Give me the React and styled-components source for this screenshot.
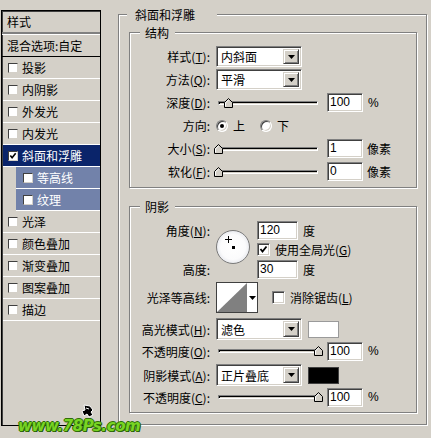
import React from 'react';
import styled, { createGlobalStyle } from 'styled-components';

const GlobalStyle = createGlobalStyle`
  html, body {
    margin: 0;
    padding: 0;
    background: #d4d0c8;
  }
  body {
    font-family: "Noto Sans CJK SC", "Liberation Sans", sans-serif;
    font-size: 12px;
    color: #000;
  }
`;

const Window = styled.div`
  position: relative;
  display: flex;
  align-items: flex-start;
  width: 431px;
  height: 438px;
  background: #d4d0c8;
  overflow: hidden;
`;

/* ---------- left list ---------- */

const Sidebar = styled.div`
  box-sizing: border-box;
  margin: 10px 0 0 1px;
  width: 100px;
  height: 416px;
  border: 1px solid #000;
  box-shadow: inset 1px 1px 0 #404040;
  display: flex;
  flex-direction: column;
`;

const SideHeader = styled.div`
  height: 21px;
  line-height: 21px;
  padding-left: 5px;
`;

const Divider = styled.div`
  height: 1px;
  border-top: 2px solid #808080;
  background: #fff;
`;

const BlendRow = styled.div`
  height: 21px;
  line-height: 21px;
  padding-left: 5px;
  border-bottom: 1px solid #000;
`;

const EffectRow = styled.div`
  display: flex;
  align-items: center;
  height: 21px;
  margin-left: ${(p) => (p.$sub ? 14 : 1)}px;
  padding-left: ${(p) => (p.$sub ? 7 : 5)}px;
  border-bottom: 1px solid #fff;
  background: ${(p) => (p.$selected ? '#0a246a' : p.$sub ? '#7282aa' : 'transparent')};
  color: ${(p) => (p.$selected || p.$sub ? '#fff' : '#000')};
`;

const SmallCheck = styled.span`
  box-sizing: border-box;
  flex: none;
  display: flex;
  align-items: center;
  justify-content: center;
  width: 10px;
  height: 10px;
  margin-right: 4px;
  background: #fff;
  border: 1px solid;
  border-color: #404040 #d4d0c8 #d4d0c8 #404040;
`;

/* ---------- right panel ---------- */

const Group = styled.div`
  position: relative;
  box-sizing: border-box;
  flex: none;
  border: 1px solid #808080;
  box-shadow: inset 1px 1px 0 #fff, 1px 1px 0 #fff;
`;

const OuterGroup = styled(Group)`
  margin: 14px 0 0 17px;
  width: 309px;
  height: 411px;
  padding: 17px 0 0 10px;
  display: flex;
  flex-direction: column;
  gap: 18px;
`;

const InnerGroup = styled(Group)`
  width: 288px;
  height: ${(p) => p.$h}px;
  padding: ${(p) => p.$pt}px 0 0 0;
`;

const Legend = styled.span`
  position: absolute;
  top: -8px;
  left: ${(p) => p.$left}px;
  padding: 0 ${(p) => p.$padR}px 0 ${(p) => p.$padL}px;
  line-height: 16px;
  background: #d4d0c8;
`;

const FormRow = styled.div`
  display: flex;
  align-items: center;
  height: ${(p) => p.$h || 23}px;
  margin-top: ${(p) => p.$mt || 0}px;
`;

const Label = styled.span`
  box-sizing: border-box;
  flex: none;
  width: 86px;
  padding-right: 6px;
  text-align: right;
  white-space: nowrap;
  align-self: center;
`;

const Key = styled.span`
  text-decoration: underline;
`;

const sunken = `
  border: 1px solid;
  border-color: #808080 #fff #fff #808080;
  box-shadow: inset 1px 1px 0 #404040, inset -1px -1px 0 #d4d0c8;
`;

const SelectBox = styled.div`
  box-sizing: border-box;
  flex: none;
  display: flex;
  align-items: center;
  width: 86px;
  height: ${(p) => p.$h || 21}px;
  padding: 2px;
  background: #fff;
  ${sunken}
`;

const SelectText = styled.span`
  flex: 1;
  padding-left: 2px;
  line-height: 15px;
`;

const DropBtn = styled.span`
  box-sizing: border-box;
  flex: none;
  display: flex;
  align-items: center;
  justify-content: center;
  width: 16px;
  height: 100%;
  background: #d4d0c8;
  border: 1px solid;
  border-color: #d4d0c8 #404040 #404040 #d4d0c8;
  box-shadow: inset 1px 1px 0 #fff, inset -1px -1px 0 #808080;
`;

const SliderWrap = styled.div`
  position: relative;
  flex: none;
  display: flex;
  align-items: center;
  width: 104px;
  height: 100%;
  margin-right: 7px;
`;

const Track = styled.div`
  box-sizing: border-box;
  margin-left: 2px;
  width: 100px;
  height: 4px;
  background: #d4d0c8;
  border: 1px solid;
  border-color: #808080 #fff #fff #808080;
  box-shadow: inset 1px 1px 0 #000;
`;

const Thumb = styled.svg`
  position: absolute;
  top: calc(50% - 5px);
  left: ${(p) => p.$pos - 4}px;
`;

const Field = styled.div`
  box-sizing: border-box;
  flex: none;
  width: ${(p) => p.$w || 36}px;
  height: 19px;
  padding-left: 2px;
  background: #fff;
  line-height: 16px;
  font-family: "Liberation Sans", "Noto Sans CJK SC", sans-serif;
  ${sunken}
`;

const Unit = styled.span`
  margin-left: ${(p) => p.$ml || 5}px;
  font-family: ${(p) => (p.$latin ? '"Liberation Sans", sans-serif' : 'inherit')};
`;

const RadioItem = styled.span`
  display: flex;
  align-items: center;
  width: 44px;
`;

const Radio = styled.span`
  box-sizing: border-box;
  position: relative;
  flex: none;
  width: 12px;
  height: 12px;
  margin-right: 5px;
  border-radius: 50%;
  background: #fff;
  border: 1px solid;
  border-color: #808080 #fff #fff #808080;
  box-shadow: inset 1px 1px 0 #404040, inset -1px -1px 0 #d4d0c8;
  &::after {
    content: '';
    display: ${(p) => (p.$checked ? 'block' : 'none')};
    position: absolute;
    left: 3px;
    top: 3px;
    width: 4px;
    height: 4px;
    border-radius: 50%;
    background: #000;
  }
`;

const CheckBox = styled.span`
  box-sizing: border-box;
  flex: none;
  display: flex;
  align-items: center;
  justify-content: center;
  width: 13px;
  height: 13px;
  margin-left: ${(p) => p.$ml || 0}px;
  margin-right: 5px;
  background: #fff;
  ${sunken}
`;

const AngleGrid = styled.div`
  display: grid;
  grid-template-columns: 86px 41px auto;
  grid-template-rows: 20px 18px 22px;
`;

const Cell = styled.div`
  display: flex;
  align-items: center;
  grid-column: ${(p) => p.$col};
  grid-row: ${(p) => p.$row};
`;

const Dial = styled.div`
  position: relative;
  box-sizing: border-box;
  grid-column: 2;
  grid-row: 1 / 4;
  align-self: start;
  margin-top: 10px;
  width: 34px;
  height: 34px;
  border-radius: 50%;
  border: 1px solid #7a7a7a;
  background: radial-gradient(circle, #fff 0%, #fbfbfc 55%, #e2e4ea 80%, #c6cad3 100%);
  &::after {
    content: '';
    position: absolute;
    left: 15px;
    top: 15px;
    width: 3px;
    height: 3px;
    background: #000;
  }
`;

const Crosshair = styled.svg`
  position: absolute;
  left: 8px;
  top: 5px;
`;

const Contour = styled.div`
  box-sizing: border-box;
  flex: none;
  display: flex;
  width: 42px;
  height: 31px;
  border: 1px solid #404040;
  background: #fff;
`;

const ContourArrow = styled.span`
  flex: 1;
  display: flex;
  align-items: center;
  justify-content: center;
  border-left: 1px solid #fff;
`;

const Swatch = styled.span`
  box-sizing: border-box;
  flex: none;
  width: 31px;
  height: 17px;
  margin-left: 6px;
  border: 1px solid ${(p) => (p.$color === '#000' ? '#404040' : '#9a9a9a')};
  background: ${(p) => p.$color};
`;

const Watermark = styled.span`
  position: absolute;
  left: 18px;
  top: 417px;
  font-family: "DejaVu Sans", sans-serif;
  font-weight: bold;
  font-style: italic;
  font-size: 15px;
  letter-spacing: -0.4px;
  color: #78d424;
  text-shadow: 1px 0 0 #2f6d08, -1px 0 0 #2f6d08, 0 1px 0 #2f6d08, 0 -1px 0 #2f6d08, 1px 1px 0 #1d4a02;
`;

const CursorMark = styled.svg`
  position: absolute;
  left: 81px;
  top: 404px;
`;

/* ---------- pieces ---------- */

const Arrow = () => (
  <svg width="7" height="4" viewBox="0 0 7 4">
    <polygon points="0,0 7,0 3.5,4" fill="#000" />
  </svg>
);

const Tick = ({ size = 9 }) => (
  <svg width={size} height={size} viewBox="0 0 9 9">
    <polyline points="1.5,4 3.5,6.5 7.5,1.5" fill="none" stroke="#000" strokeWidth="1.8" />
  </svg>
);

const Select = ({ value, h }) => (
  <SelectBox $h={h}>
    <SelectText>{value}</SelectText>
    <DropBtn>
      <Arrow />
    </DropBtn>
  </SelectBox>
);

const Slider = ({ value }) => (
  <SliderWrap>
    <Track />
    <Thumb $pos={2 + value} width="9" height="10" viewBox="0 0 9 10">
      <polygon points="0.5,9.5 0.5,4.5 4.5,0.5 8.5,4.5 8.5,9.5" fill="#d4d0c8" stroke="#000" />
      <polyline points="1.5,8.5 1.5,4.9 4.5,1.9" fill="none" stroke="#fff" />
    </Thumb>
  </SliderWrap>
);

const effects = [
  { name: '投影' },
  { name: '内阴影' },
  { name: '外发光' },
  { name: '内发光' },
  { name: '斜面和浮雕', checked: true, selected: true },
  { name: '等高线', sub: true },
  { name: '纹理', sub: true },
  { name: '光泽' },
  { name: '颜色叠加' },
  { name: '渐变叠加' },
  { name: '图案叠加' },
  { name: '描边' },
];

export default function App() {
  return (
    <Window>
      <GlobalStyle />
      <Sidebar>
        <SideHeader>样式</SideHeader>
        <Divider />
        <BlendRow>混合选项:自定</BlendRow>
        {effects.map((e) => (
          <EffectRow key={e.name} $selected={e.selected} $sub={e.sub}>
            <SmallCheck>{e.checked && <Tick size={8} />}</SmallCheck>
            {e.name}
          </EffectRow>
        ))}
      </Sidebar>

      <OuterGroup>
        <Legend $left={8} $padL={8} $padR={22}>斜面和浮雕</Legend>

        <InnerGroup $h={156} $pt={12}>
          <Legend $left={10} $padL={5} $padR={6}>结构</Legend>
          <FormRow>
            <Label>样式(<Key>T</Key>):</Label>
            <Select value="内斜面" />
          </FormRow>
          <FormRow>
            <Label>方法(<Key>Q</Key>):</Label>
            <Select value="平滑" />
          </FormRow>
          <FormRow>
            <Label>深度(<Key>D</Key>):</Label>
            <Slider value={10} />
            <Field>100</Field>
            <Unit $latin>%</Unit>
          </FormRow>
          <FormRow>
            <Label>方向:</Label>
            <RadioItem>
              <Radio $checked />上
            </RadioItem>
            <RadioItem>
              <Radio />下
            </RadioItem>
          </FormRow>
          <FormRow>
            <Label>大小(<Key>S</Key>):</Label>
            <Slider value={0} />
            <Field>1</Field>
            <Unit $ml={4}>像素</Unit>
          </FormRow>
          <FormRow>
            <Label>软化(<Key>F</Key>):</Label>
            <Slider value={0} />
            <Field>0</Field>
            <Unit $ml={4}>像素</Unit>
          </FormRow>
        </InnerGroup>

        <InnerGroup $h={207} $pt={13}>
          <Legend $left={10} $padL={5} $padR={6}>阴影</Legend>
          <AngleGrid>
            <Cell $col={1} $row={1}>
              <Label>角度(<Key>N</Key>):</Label>
            </Cell>
            <Dial>
              <Crosshair width="7" height="7" viewBox="0 0 7 7">
                <path d="M3.5 0v7M0 3.5h7" stroke="#000" strokeWidth="1" />
              </Crosshair>
            </Dial>
            <Cell $col={3} $row={1}>
              <Field $w={41}>120</Field>
              <Unit>度</Unit>
            </Cell>
            <Cell $col={3} $row={2}>
              <CheckBox>
                <Tick />
              </CheckBox>
              使用全局光(<Key>G</Key>)
            </Cell>
            <Cell $col={1} $row={3}>
              <Label>高度:</Label>
            </Cell>
            <Cell $col={3} $row={3}>
              <Field $w={41}>30</Field>
              <Unit>度</Unit>
            </Cell>
          </AngleGrid>
          <FormRow $h={35}>
            <Label>光泽等高线:</Label>
            <Contour>
              <svg width="30" height="29" viewBox="0 0 30 29">
                <polygon points="0,29 30,0 30,29" fill="#808080" />
              </svg>
              <ContourArrow>
                <Arrow />
              </ContourArrow>
            </Contour>
            <CheckBox $ml={14} />
            消除锯齿(<Key>L</Key>)
          </FormRow>
          <FormRow $h={22} $mt={3}>
            <Label>高光模式(<Key>H</Key>):</Label>
            <Select value="滤色" h={22} />
            <Swatch $color="#fff" />
          </FormRow>
          <FormRow $h={22}>
            <Label>不透明度(<Key>O</Key>):</Label>
            <Slider value={100} />
            <Field>100</Field>
            <Unit $latin>%</Unit>
          </FormRow>
          <FormRow $h={22} $mt={2}>
            <Label>阴影模式(<Key>A</Key>):</Label>
            <Select value="正片叠底" h={22} />
            <Swatch $color="#000" />
          </FormRow>
          <FormRow $h={22}>
            <Label>不透明度(<Key>C</Key>):</Label>
            <Slider value={100} />
            <Field>100</Field>
            <Unit $latin>%</Unit>
          </FormRow>
        </InnerGroup>
      </OuterGroup>

      <CursorMark width="14" height="15" viewBox="0 0 14 15">
        <path d="M3 1 L9 2 L12 6 L10 8 L12 11 L8 13 L6 10 L3 12 L1 7 L4 6 Z" fill="#000" stroke="#fff" strokeWidth="1" />
        <path d="M5 4 L8 5" stroke="#fff" strokeWidth="1" />
      </CursorMark>
      <Watermark>www.78Ps.com</Watermark>
    </Window>
  );
}
